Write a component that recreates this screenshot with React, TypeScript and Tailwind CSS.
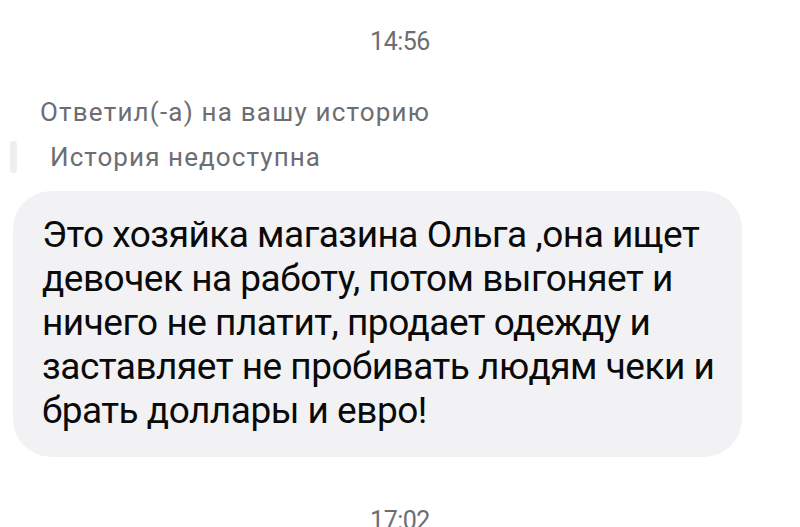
export default function App() {
  return (
    <div
      className="w-[800px] h-[527px] overflow-hidden bg-white"
      style={{ fontFamily: "Roboto, 'Liberation Sans', sans-serif" }}
    >
      <div className="pt-[26px] text-center text-[25px] leading-[32px] tracking-[-0.5px] text-[#6d6d72]">
        14:56
      </div>

      <div className="mt-[38px] pl-[40px] text-[26px] leading-[32px] tracking-[1.2px] text-[#6d6d72]">
        Ответил(-а) на вашу историю
      </div>

      <div className="mt-[13px] flex items-center pl-[10px]">
        <div className="w-[7px] h-[32px] rounded-full bg-[#eeeef0]" />
        <span className="ml-[33px] text-[26px] leading-[32px] tracking-[1.1px] text-[#6d6d72]">
          История недоступна
        </span>
      </div>

      <div className="mt-[18px] ml-[13px] w-[729px] rounded-[38px] bg-[#f2f2f4] pl-[29px] pr-[10px] pt-[22px] pb-[24px]">
        <p className="text-[37px] leading-[44px] tracking-[-0.5px] text-[#0a0a0a] whitespace-nowrap">
          Это хозяйка магазина Ольга ,она ищет
          <br />
          девочек на работу, потом выгоняет и
          <br />
          ничего не платит, продает одежду и
          <br />
          заставляет не пробивать людям чеки и
          <br />
          брать доллары и евро!
        </p>
      </div>

      <div className="mt-[48px] text-center text-[25px] leading-[32px] tracking-[-0.5px] text-[#6d6d72]">
        17:02
      </div>
    </div>
  );
}
